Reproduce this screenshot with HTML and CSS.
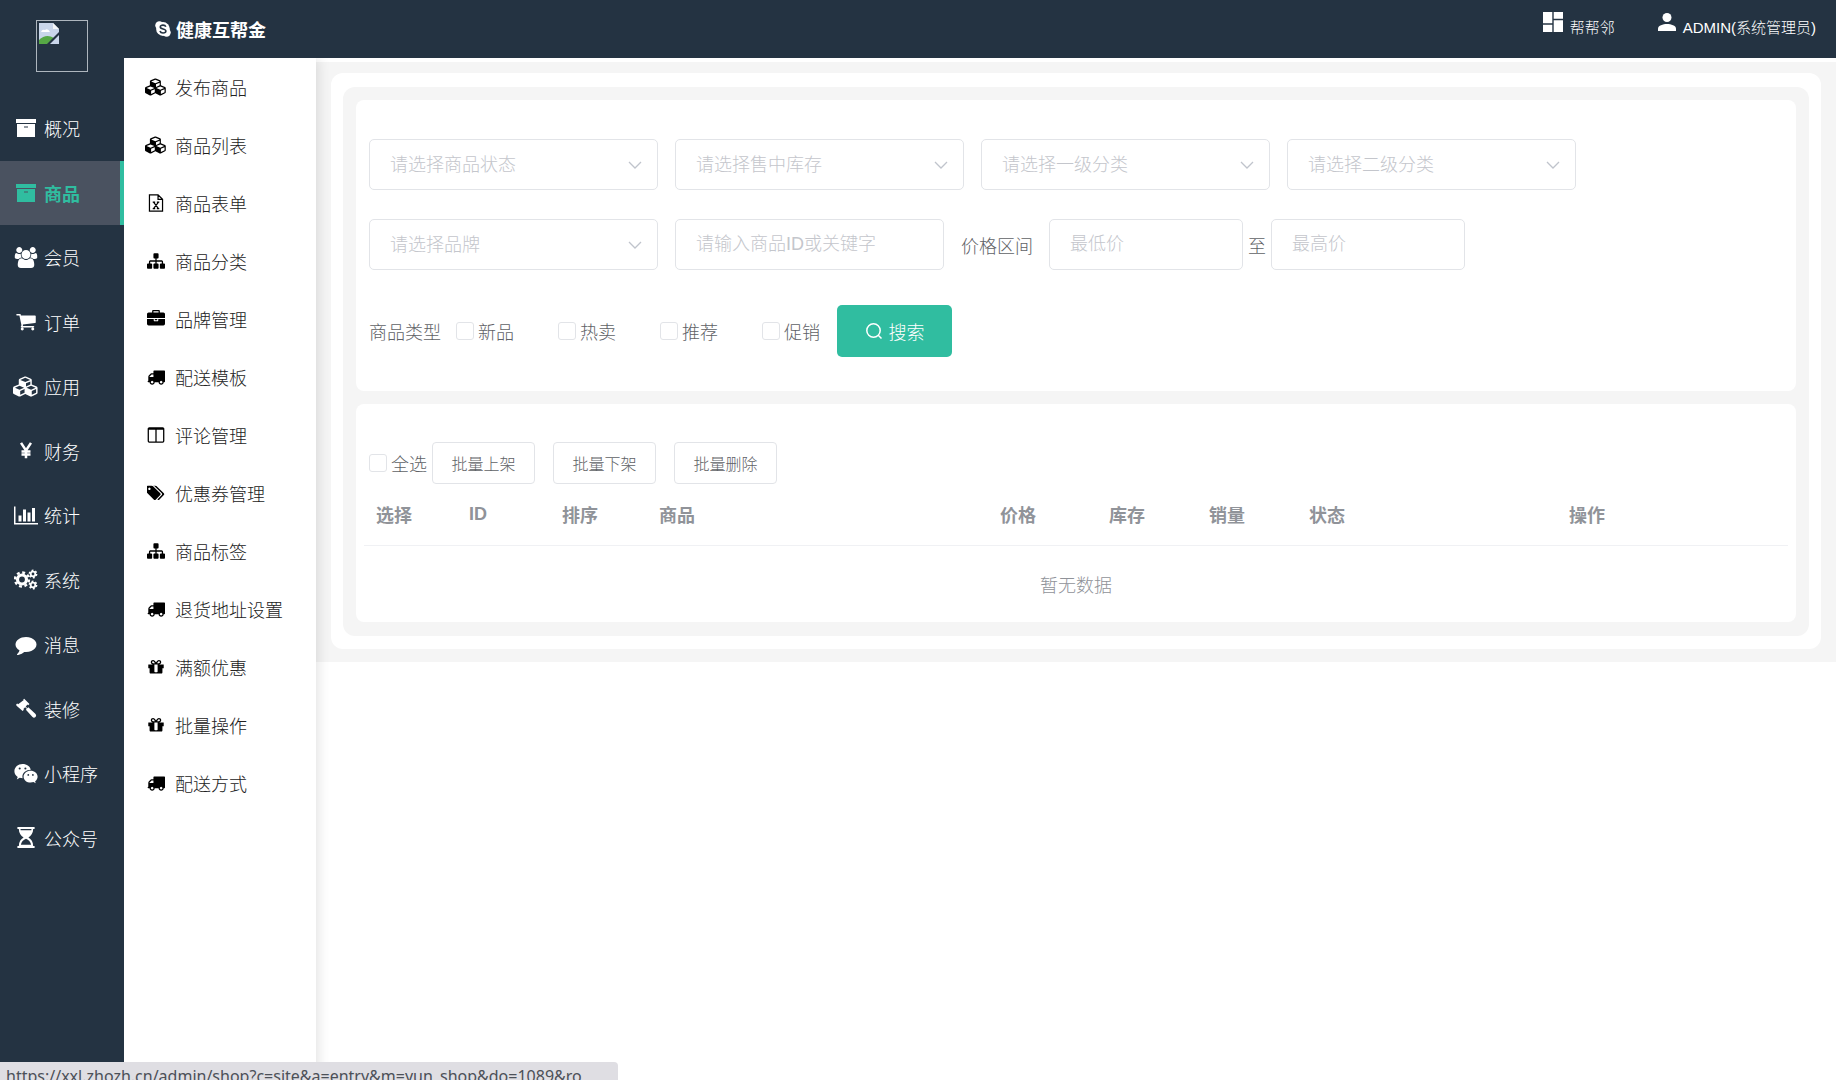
FILE: index.html
```
<!DOCTYPE html>
<html lang="zh-CN">
<head>
    <meta charset="UTF-8">
    <meta name="viewport" content="width=device-width, initial-scale=1.0">
    <title>商品列表</title>
    <link rel="stylesheet" href="styles.css">
</head>
<body>
    <!-- icon sprite -->
    <svg class="sprite" aria-hidden="true">
        <symbol id="i-archive" viewBox="0 0 20 18"><path d="M0 0h20v4H0zM1 5h18v13H1zM8 7.500v1h4v-1z" fill-rule="evenodd"/></symbol>
        <symbol id="i-cubes" viewBox="0 0 2304 1792"><path d="M640 1632l384-192v-314l-384 164v342zm-64-454l404-173-404-173-404 173zm1088 454l384-192v-314l-384 164v342zm-64-454l404-173-404-173-404 173zm-448-293l384-165v-266l-384 164v267zm-64-379l441-189-441-189-441 189zm1088 518v416q0 36-19 67t-52 47l-448 224q-25 14-57 14t-57-14l-448-224q-4-2-7-4-2 2-7 4l-448 224q-25 14-57 14t-57-14l-448-224q-33-16-52-47t-19-67v-416q0-38 21.500-70t56.500-48l434-186v-400q0-38 21.500-70t56.500-48l448-192q23-10 50-10t50 10l448 192q35 16 56.500 48t21.500 70v400l434 186q36 16 57 48t21 70z"/></symbol>
        <symbol id="i-users" viewBox="0 0 1920 1792"><path d="M593 896q-162 5-265 128h-134q-82 0-138-40.500t-56-118.500q0-353 124-353 6 0 43.500 21t97.500 42.500 119 21.500q67 0 133-23-5 37-5 66 0 139 81 256zm1071 637q0 120-73 189.500t-194 69.500h-874q-121 0-194-69.500t-73-189.500q0-53 3.500-103.500t14-109 26.500-108.500 43-97.500 62-81 85.500-53.500 111.500-20q10 0 43 21.500t73 48 107 48 135 21.500 135-21.500 107-48 73-48 43-21.500q61 0 111.500 20t85.500 53.500 62 81 43 97.500 26.500 108.500 14 109 3.500 103.500zm-1024-1277q0 106-75 181t-181 75-181-75-75-181 75-181 181-75 181 75 75 181zm704 384q0 159-112.500 271.500t-271.500 112.500-271.500-112.500-112.500-271.500 112.500-271.500 271.500-112.500 271.500 112.500 112.500 271.500zm576 225q0 78-56 118.500t-138 40.500h-134q-103-123-265-128 81-117 81-256 0-29-5-66 66 23 133 23 59 0 119-21.500t97.500-42.500 43.500-21q124 0 124 353zm-128-609q0 106-75 181t-181 75-181-75-75-181 75-181 181-75 181 75 75 181z"/></symbol>
        <symbol id="i-cart" viewBox="0 0 1792 1792"><path d="M704 1536q0 52-38 90t-90 38-90-38-38-90 38-90 90-38 90 38 38 90zm896 0q0 52-38 90t-90 38-90-38-38-90 38-90 90-38 90 38 38 90zm128-1088v512q0 24-16.500 42.500t-40.500 21.500l-1044 122q13 60 13 70 0 16-24 64h920q26 0 45 19t19 45-19 45-45 19h-1024q-26 0-45-19t-19-45q0-11 8-31.500t16-36 21.500-40 15.500-29.500l-177-823h-204q-26 0-45-19t-19-45 19-45 45-19h256q16 0 28.500 6.500t19.500 15.500 13 24.500 8 26 5.500 29.500 4.500 26h1201q26 0 45 19t19 45z"/></symbol>
        <symbol id="i-yen" viewBox="0 0 20 20"><path d="M4.500 1l5.500 8.500L15.500 1M10 9.500V18M5 10.500h10M5 14h10" fill="none" stroke="currentColor" stroke-width="2.800"/></symbol>
        <symbol id="i-chart" viewBox="0 0 2048 1792"><path d="M640 896v512h-256v-512h256zm384-512v1024h-256v-1024h256zm1024 1152v128h-2048v-1536h128v1408h1920zm-640-896v768h-256v-768h256zm384-384v1152h-256v-1152h256z"/></symbol>
        <symbol id="i-cogs" viewBox="0 0 24 20">
            <g fill="none" stroke="currentColor">
                <circle cx="8" cy="10" r="4.500" stroke-width="3.200"/>
                <circle cx="8" cy="10" r="7" stroke-width="2.400" stroke-dasharray="2.900 2.598"/>
                <circle cx="19" cy="4.500" r="2.300" stroke-width="1.800"/>
                <circle cx="19" cy="4.500" r="3.700" stroke-width="1.400" stroke-dasharray="1.900 1.975"/>
                <circle cx="19" cy="15.500" r="2.300" stroke-width="1.800"/>
                <circle cx="19" cy="15.500" r="3.700" stroke-width="1.400" stroke-dasharray="1.900 1.975"/>
            </g>
        </symbol>
        <symbol id="i-comment" viewBox="0 0 1792 1792"><path d="M1792 896q0 174-120 321.500t-326 233-450 85.500q-70 0-145-8-198 175-460 242-49 14-114 22-17 2-30.500-9t-17.500-29v-1q-3-4-.5-12t2-10 4.500-9.500l6-9 7-8.500 8-9q7-8 31-34.500t34.500-38 31-39.500 32.500-51 27-59 26-76q-157-89-247.500-220t-90.500-281q0-130 71-248.500t191-204.500 286-136.500 348-50.500q244 0 450 85.500t326 233 120 321.500z"/></symbol>
        <symbol id="i-gavel" viewBox="0 0 20 20"><path d="M8.300.6l5 5-1.200 1.200-.6-.5-1.800 1.800 1.500 1.600 1-.9 6.900 6.400q1.200 1.400 0 2.900-1.500 1.300-2.900.1l-6.300-6.900.9-1-1.600-1.500-1.700 1.700.5.600-1.200 1.200-5.800-5q-.8-.9 0-1.500l.7-.6.8.7L7.900 1.900l-.6-.6z"/></symbol>
        <symbol id="i-wechat" viewBox="0 0 24 20">
            <path fill-rule="evenodd" d="M8.500.5c4.400 0 7.800 2.600 8.300 5.800-4.700 0-8.400 3-8.400 6.800 0 .6.100 1.200.3 1.700-1 0-2-.2-3-.5l-2.900 1.600.9-2.500C1.600 12 .4 10 .4 7.700.4 3.700 4 .5 8.500.5zM5.700 4a1 1 0 1 0 0 2.100A1 1 0 0 0 5.700 4zm5.700 0a1 1 0 1 0 0 2.100 1 1 0 0 0 0-2.100z"/>
            <path fill-rule="evenodd" d="M16.600 7.200c3.800 0 7 2.600 7 6 0 1.900-1 3.500-2.500 4.600l.6 2-2.200-1.200c-.9.300-1.900.5-2.900.5-3.900 0-7-2.600-7-5.900s3.100-6 7-6zM14.300 10.500a.9.900 0 1 0 0 1.800.9.900 0 0 0 0-1.800zm4.600 0a.9.900 0 1 0 0 1.800.9.900 0 0 0 0-1.800z"/>
        </symbol>
        <symbol id="i-hourglass" viewBox="0 0 20 22"><path fill-rule="evenodd" d="M1 0h18v2.200h-1.500c0 4-2 7.200-5 8.800 3 1.600 5 4.800 5 8.800H19V22H1v-2.200h1.500c0-4 2-7.200 5-8.800-3-1.600-5-4.800-5-8.800H1zM4.300 2.200c0 .4 0 .7.100 1.100h11.200c.1-.4.1-.7.1-1.100zM10 12.300c-2.800.9-4.800 3.300-5.400 6.300h10.800c-.6-3-2.600-5.400-5.400-6.300z"/></symbol>
        <symbol id="i-excel" viewBox="0 0 20 22"><path d="M2 1h10.500L18 6.500V21H2zM12.500 1v5.500H18M7 10l6 8M13 10l-6 8M6 10h3M11 10h3M6 18h3M11 18h3" fill="none" stroke="currentColor" stroke-width="1.500"/></symbol>
        <symbol id="i-sitemap" viewBox="0 0 1792 1792"><path d="M1792 1248v320q0 40-28 68t-68 28h-320q-40 0-68-28t-28-68v-320q0-40 28-68t68-28h96v-192h-512v192h96q40 0 68 28t28 68v320q0 40-28 68t-68 28h-320q-40 0-68-28t-28-68v-320q0-40 28-68t68-28h96v-192h-512v192h96q40 0 68 28t28 68v320q0 40-28 68t-68 28h-320q-40 0-68-28t-28-68v-320q0-40 28-68t68-28h96v-192q0-52 38-90t90-38h512v-192h-96q-40 0-68-28t-28-68v-320q0-40 28-68t68-28h320q40 0 68 28t28 68v320q0 40-28 68t-68 28h-96v192h512q52 0 90 38t38 90v192h96q40 0 68 28t28 68z"/></symbol>
        <symbol id="i-briefcase" viewBox="0 0 1792 1792"><path d="M640 256h512v-128h-512v128zm1152 640v480q0 66-47 113t-113 47h-1472q-66 0-113-47t-47-113v-480h672v160q0 26 19 45t45 19h320q26 0 45-19t19-45v-160h672zm-768 0v128h-256v-128h256zm768-480v384h-1792v-384q0-66 47-113t113-47h352v-160q0-40 28-68t68-28h576q40 0 68 28t28 68v160h352q66 0 113 47t47 113z"/></symbol>
        <symbol id="i-truck" viewBox="0 0 1792 1792"><path d="M640 1408q0-52-38-90t-90-38-90 38-38 90 38 90 90 38 90-38 38-90zm-384-512h384v-256h-158q-13 0-22 9l-195 195q-9 9-9 22v30zm1280 512q0-52-38-90t-90-38-90 38-38 90 38 90 90 38 90-38 38-90zm256-1088v1024q0 15-4 26.500t-13.500 18.500-16.500 11.500-23.500 6-22.500 2-25.500 0-22.500-.5q0 106-75 181t-181 75-181-75-75-181h-384q0 106-75 181t-181 75-181-75-75-181h-64q-3 0-22.500.5t-25.500 0-22.500-2-23.500-6-16.500-11.500-13.500-18.500-4-26.500q0-26 19-45t45-19v-320q0-8-.5-35t0-38 2.500-34.500 6.500-37 14-30.500 22.500-30l198-198q19-19 50.500-32t58.500-13h160v-192q0-26 19-45t45-19h1024q26 0 45 19t19 45z"/></symbol>
        <symbol id="i-columns" viewBox="0 0 1792 1792"><path d="M224 1536h608v-1152h-640v1120q0 13 9.500 22.500t22.500 9.500zm1376-32v-1120h-640v1152h608q13 0 22.500-9.500t9.500-22.500zm128-1216v1216q0 66-47 113t-113 47h-1344q-66 0-113-47t-47-113v-1216q0-66 47-113t113-47h1344q66 0 113 47t47 113z"/></symbol>
        <symbol id="i-tags" viewBox="0 0 1920 1792"><path d="M384 448q0-53-37.500-90.500t-90.500-37.500-90.500 37.500-37.500 90.500 37.500 90.500 90.500 37.500 90.500-37.500 37.500-90.500zm1067 576q0 53-37 90l-491 492q-39 37-91 37-53 0-90-37l-715-716q-38-37-64.500-101t-26.500-117v-416q0-52 38-90t90-38h416q53 0 117 26.500t102 64.500l715 714q37 39 37 91zm384 0q0 53-37 90l-491 492q-39 37-91 37-36 0-59-14t-53-45l470-470q37-37 37-90 0-52-37-91l-715-714q-38-38-102-64.500t-117-26.500h224q53 0 117 26.500t102 64.500l715 714q37 39 37 91z"/></symbol>
        <symbol id="i-gift" viewBox="0 0 1792 1792"><path d="M1056 1356v-716h-320v716q0 25 18 38.500t46 13.500h192q28 0 46-13.500t18-38.500zm-456-844h195l-126-161q-26-31-69-31-40 0-68 28t-28 68 28 68 68 28zm688-96q0-40-28-68t-68-28q-43 0-69 31l-125 161h194q40 0 68-28t28-68zm376 256v320q0 14-9 23t-23 9h-96v416q0 40-28 68t-68 28h-1088q-40 0-68-28t-28-68v-416h-96q-14 0-23-9t-9-23v-320q0-14 9-23t23-9h440q-93 0-158.500-65.500t-65.500-158.500 65.500-158.500 158.500-65.500q107 0 168 77l128 165 128-165q61-77 168-77 93 0 158.500 65.500t65.500 158.500-65.500 158.500-158.500 65.500h440q14 0 23 9t9 23z"/></symbol>
        <symbol id="i-skype" viewBox="0 0 20 20">
            <circle cx="5.500" cy="5.500" r="5.200"/><circle cx="14.500" cy="14.500" r="5.200"/><circle cx="10" cy="10" r="8.600"/>
            <path d="M13.500 7.300C13 5.600 11.600 5.200 10 5.200c-2 0-3.400.8-3.400 2.300 0 3.200 7 1.700 7 5 0 1.600-1.600 2.500-3.600 2.500s-3.300-.8-3.800-2.500" fill="none" stroke="#243342" stroke-width="2"/>
        </symbol>
        <symbol id="i-dashboard" viewBox="0 0 20 20"><path d="M0 0h9.300v11.300H0zM10.700 0H20v6.800h-9.300zM0 12.700h9.300V20H0zM10.700 8.200H20V20h-9.300z"/></symbol>
        <symbol id="i-user" viewBox="0 0 18 18"><circle cx="9" cy="4.500" r="4.500"/><path d="M0 18v-2.500C0 12.500 5 11 9 11s9 1.500 9 4.500V18z"/></symbol>
        <symbol id="i-search" viewBox="0 0 18 18"><path d="M13.500 13.500l3 3M15.200 8.500a6.700 6.700 0 1 1-13.400 0 6.700 6.700 0 0 1 13.400 0z" fill="none" stroke="currentColor" stroke-width="1.500"/></symbol>
    </svg>

    <aside class="sidebar">
        <div class="logo">
            <svg width="20" height="21" viewBox="0 0 20 21" role="img" aria-label="logo">
                <path d="M0 0h14l6 6v15H0z" fill="#c9d6ea"/>
                <path d="M14 0v6h6z" fill="#f5f7fa"/>
                <path d="M2 9q1-3 4-2 3-2 5 2z" fill="#fff"/>
                <path d="M0 21v-4q7-7 15-2l-5 6z" fill="#56a845"/>
                <path d="M20 9v3l-9 9H8z" fill="#243342"/>
            </svg>
        </div>
        <nav class="main-nav">
            <a href="#"><svg class="icon"><use href="#i-archive"/></svg>概况</a>
            <a href="#" class="active"><svg class="icon"><use href="#i-archive"/></svg>商品</a>
            <a href="#"><svg class="icon icon-lg"><use href="#i-users"/></svg>会员</a>
            <a href="#"><svg class="icon icon-lg"><use href="#i-cart"/></svg>订单</a>
            <a href="#"><svg class="icon icon-xl"><use href="#i-cubes"/></svg>应用</a>
            <a href="#"><svg class="icon"><use href="#i-yen"/></svg>财务</a>
            <a href="#"><svg class="icon icon-lg"><use href="#i-chart"/></svg>统计</a>
            <a href="#"><svg class="icon icon-lg"><use href="#i-cogs"/></svg>系统</a>
            <a href="#"><svg class="icon icon-lg"><use href="#i-comment"/></svg>消息</a>
            <a href="#"><svg class="icon icon-lg"><use href="#i-gavel"/></svg>装修</a>
            <a href="#"><svg class="icon icon-lg"><use href="#i-wechat"/></svg>小程序</a>
            <a href="#"><svg class="icon icon-lg"><use href="#i-hourglass"/></svg>公众号</a>
        </nav>
    </aside>

    <div class="page">
        <header class="topbar">
            <div class="brand"><svg><use href="#i-skype"/></svg>健康互帮金</div>
            <div class="account">
                <a href="#"><svg class="dash"><use href="#i-dashboard"/></svg>帮帮邻</a>
                <a href="#"><svg class="user"><use href="#i-user"/></svg>ADMIN(系统管理员)</a>
            </div>
        </header>

        <div class="body">
            <nav class="sub-nav">
                <a href="#"><svg class="wide"><use href="#i-cubes"/></svg>发布商品</a>
                <a href="#"><svg class="wide"><use href="#i-cubes"/></svg>商品列表</a>
                <a href="#"><svg><use href="#i-excel"/></svg>商品表单</a>
                <a href="#"><svg><use href="#i-sitemap"/></svg>商品分类</a>
                <a href="#"><svg><use href="#i-briefcase"/></svg>品牌管理</a>
                <a href="#"><svg><use href="#i-truck"/></svg>配送模板</a>
                <a href="#"><svg><use href="#i-columns"/></svg>评论管理</a>
                <a href="#"><svg><use href="#i-tags"/></svg>优惠券管理</a>
                <a href="#"><svg><use href="#i-sitemap"/></svg>商品标签</a>
                <a href="#"><svg><use href="#i-truck"/></svg>退货地址设置</a>
                <a href="#"><svg><use href="#i-gift"/></svg>满额优惠</a>
                <a href="#"><svg><use href="#i-gift"/></svg>批量操作</a>
                <a href="#"><svg><use href="#i-truck"/></svg>配送方式</a>
            </nav>

            <main class="content">
                <div class="frame">
                    <div class="panel">
                        <form class="card filters">
                            <div class="row">
                                <select class="field" aria-label="商品状态"><option>请选择商品状态</option></select>
                                <select class="field" aria-label="售中库存"><option>请选择售中库存</option></select>
                                <select class="field" aria-label="一级分类"><option>请选择一级分类</option></select>
                                <select class="field" aria-label="二级分类"><option>请选择二级分类</option></select>
                            </div>
                            <div class="row">
                                <select class="field" aria-label="品牌"><option>请选择品牌</option></select>
                                <input type="text" class="field keyword" placeholder="请输入商品ID或关键字" aria-label="商品ID或关键字">
                                <div class="range">
                                    <label for="minPrice">价格区间</label>
                                    <input type="text" id="minPrice" class="field price" placeholder="最低价">
                                    <label for="maxPrice" class="to">至</label>
                                    <input type="text" id="maxPrice" class="field price" placeholder="最高价">
                                </div>
                            </div>
                            <div class="row types">
                                <span class="types-label">商品类型</span>
                                <label class="check"><input type="checkbox">新品</label>
                                <label class="check"><input type="checkbox">热卖</label>
                                <label class="check"><input type="checkbox">推荐</label>
                                <label class="check"><input type="checkbox">促销</label>
                                <button type="submit" class="btn-search"><svg><use href="#i-search"/></svg>搜索</button>
                            </div>
                        </form>

                        <section class="card list">
                            <div class="batch">
                                <label class="check"><input type="checkbox">全选</label>
                                <div class="batch-buttons">
                                    <button type="button">批量上架</button>
                                    <button type="button">批量下架</button>
                                    <button type="button">批量删除</button>
                                </div>
                            </div>
                            <table>
                                <thead>
                                    <tr>
                                        <th class="c-sm">选择</th>
                                        <th class="c-sm">ID</th>
                                        <th class="c-sort">排序</th>
                                        <th>商品</th>
                                        <th class="c-price">价格</th>
                                        <th class="c-md">库存</th>
                                        <th class="c-md">销量</th>
                                        <th class="c-status">状态</th>
                                        <th class="c-action">操作</th>
                                    </tr>
                                </thead>
                                <tbody>
                                    <tr><td colspan="9">暂无数据</td></tr>
                                </tbody>
                            </table>
                        </section>
                    </div>
                </div>
            </main>
        </div>
    </div>

    <div class="status-bar">https://xxl.zhozh.cn/admin/shop?c=site&amp;a=entry&amp;m=yun_shop&amp;do=1089&amp;ro</div>
</body>
</html>
```
FILE: styles.css
```
* {
    box-sizing: border-box;
}
body {
    margin: 0;
    height: 100vh;
    display: flex;
    overflow: hidden;
    font-family: "Liberation Sans", "Noto Sans CJK SC", sans-serif;
    font-size: 18px;
    font-weight: 300;
    color: #606266;
    background-color: #fff;
}
a {
    color: inherit;
    text-decoration: none;
}
svg {
    fill: currentColor;
    flex: none;
}
.sprite {
    display: none;
}
input, select, button {
    font-family: inherit;
    font-size: 18px;
    font-weight: 300;
}

/* left menu */
.sidebar {
    width: 124px;
    flex: none;
    background-color: #243342;
    color: #fff;
}
.logo {
    width: 52px;
    height: 52px;
    margin: 20px 36px 24px;
    padding: 2px;
    border: 1px solid #aeb6be;
}
.main-nav {
    display: grid;
    grid-auto-rows: 1fr;
    height: 774px;
}
.main-nav a {
    display: flex;
    align-items: center;
    gap: 6px;
    padding-left: 14px;
}
.main-nav .active {
    background-color: #4a5260;
    border-right: 4px solid #30bda0;
    color: #30bda0;
    font-weight: bold;
}
.icon {
    width: 24px;
    height: 18px;
}
.icon-lg {
    height: 21px;
}
.icon-xl {
    width: 26px;
    height: 21px;
    margin: 0 -1px;
}

/* header */
.page {
    flex: 1;
    min-width: 0;
    display: flex;
    flex-direction: column;
}
.topbar {
    height: 58px;
    flex: none;
    display: flex;
    justify-content: space-between;
    padding: 0 20px 0 31px;
    background-color: #243342;
    color: #fff;
}
.brand {
    display: flex;
    align-items: center;
    gap: 5px;
    font-weight: bold;
}
.brand svg {
    width: 16px;
    height: 16px;
}
.account {
    display: flex;
    gap: 43px;
    height: 52px;
    font-size: 15px;
}
.account a {
    display: flex;
    align-items: center;
    gap: 7px;
}
.account svg {
    width: 20px;
    height: 20px;
    margin-bottom: 8px;
}
.account .user {
    width: 18px;
    height: 18px;
}

/* second menu */
.body {
    flex: 1;
    display: flex;
    min-height: 0;
}
.sub-nav {
    position: relative;
    z-index: 1;
    width: 192px;
    flex: none;
    background-color: #fff;
    box-shadow: 2px 0 12px rgba(0, 0, 0, 0.12);
    color: #222;
    clip-path: inset(0 -20px 0 0);
}
.sub-nav a {
    display: flex;
    align-items: center;
    height: 58px;
    padding-left: 20px;
}
.sub-nav svg {
    width: 18px;
    height: 18px;
    margin: 0 10px 0 3px;
    color: #000;
}
.sub-nav .wide {
    width: 22px;
    margin: 0 8px 0 1px;
}

/* content */
.content {
    flex: 1;
    min-width: 0;
    align-self: flex-start;
    margin-top: 4px;
    padding: 11px 15px 13px;
    background-color: #f5f5f5;
}
.frame {
    padding: 14px 12px 13px;
    border-radius: 12px;
    background-color: #fff;
}
.panel {
    display: flex;
    flex-direction: column;
    gap: 13px;
    padding: 13px 13px 14px;
    border-radius: 12px;
    background-color: #f5f5f5;
}
.card {
    border-radius: 8px;
    background-color: #fff;
}
.filters {
    padding: 39px 13px 34px;
}
.row {
    display: flex;
    align-items: center;
    flex-wrap: wrap;
    gap: 17px;
    margin-bottom: 29px;
}
.field {
    width: 289px;
    height: 51px;
    padding: 0 20px;
    border: 1px solid #e2e4e8;
    border-radius: 5px;
    background-color: #fff;
    color: #606266;
}
.field::placeholder {
    color: #c4c6cc;
    opacity: 1;
}
select.field {
    appearance: none;
    color: #c4c6cc;
    background-image: url("data:image/svg+xml,%3Csvg xmlns='http://www.w3.org/2000/svg' width='14' height='8'%3E%3Cpath d='M1 1l6 6 6-6' fill='none' stroke='%23c0c4cc' stroke-width='1.300'/%3E%3C/svg%3E");
    background-repeat: no-repeat;
    background-position: right 15px center;
}
.keyword {
    width: 269px;
}
.range {
    display: flex;
    align-items: center;
}
.range .price {
    width: 194px;
    margin-left: 16px;
}
.range .to {
    margin: 0 5px;
}
.range .to + .price {
    margin-left: 0;
}
.types {
    gap: 0;
    margin: 35px 0 0;
}
.types-label {
    margin-right: 15px;
}
.check {
    display: flex;
    align-items: center;
    gap: 4px;
}
.check input {
    appearance: none;
    width: 18px;
    height: 18px;
    margin: 0;
    border: 1px solid #e2e4e8;
    border-radius: 3px;
    background-color: #fff;
}
.types .check + .check {
    margin-left: 44px;
}
.btn-search {
    display: flex;
    align-items: center;
    justify-content: center;
    gap: 6px;
    width: 115px;
    height: 52px;
    margin-left: 17px;
    border: none;
    border-radius: 5px;
    background-color: #30bda0;
    color: #fff;
    cursor: pointer;
}
.btn-search svg {
    width: 18px;
    height: 18px;
}

/* goods list */
.list {
    padding-top: 38px;
}
.batch {
    display: flex;
    align-items: center;
    gap: 5px;
    padding-left: 13px;
}
.batch-buttons {
    display: flex;
    gap: 18px;
}
.batch-buttons button {
    width: 103px;
    height: 42px;
    padding: 0;
    border: 1px solid #e2e4e8;
    border-radius: 4px;
    background-color: #fff;
    color: #606266;
    font-size: 16px;
    cursor: pointer;
}
.list table {
    width: calc(100% - 16px);
    margin: 0 8px;
    border-collapse: collapse;
    table-layout: fixed;
}
.list th {
    height: 61px;
    padding: 0 0 0 12px;
    border-bottom: 1px solid #f0f1f4;
    text-align: left;
    font-weight: bold;
    color: #909399;
}
.list td {
    height: 77px;
    padding: 0;
    text-align: center;
    color: #909399;
}
.c-sm {
    width: 93px;
}
.c-sort {
    width: 97px;
}
.c-md {
    width: 100px;
}
.c-price {
    width: 109px;
}
.c-status {
    width: 260px;
}
.c-action {
    width: 231px;
}

/* link preview at the bottom of the window */
.status-bar {
    position: fixed;
    left: 0;
    bottom: 0;
    z-index: 2;
    width: 618px;
    height: 18px;
    padding: 3px 6px 0;
    overflow: hidden;
    border-top-right-radius: 4px;
    background-color: #dfdee3;
    color: #4c5058;
    font-family: "Noto Sans", "Open Sans", sans-serif;
    font-size: 16px;
    font-weight: 400;
    white-space: nowrap;
}
```
